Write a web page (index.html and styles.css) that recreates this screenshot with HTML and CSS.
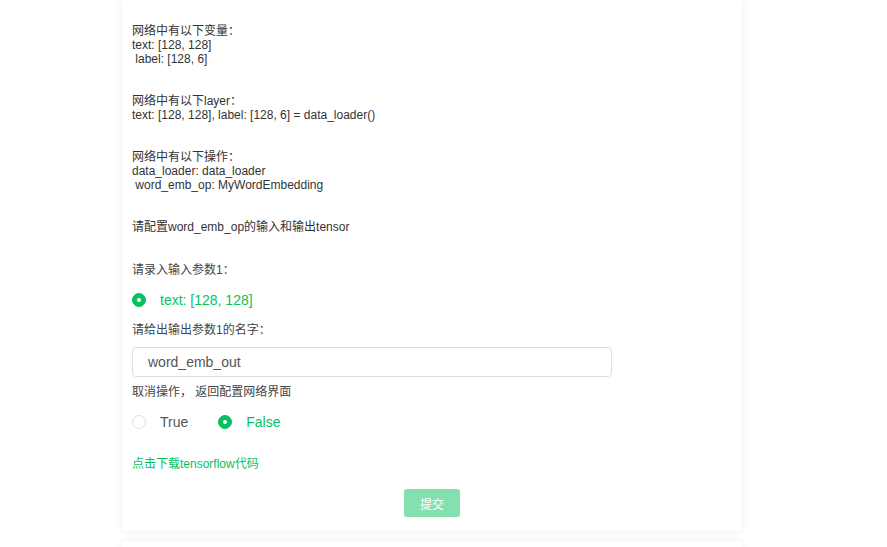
FILE: index.html
```html
<!DOCTYPE html>
<html lang="zh">
<head>
<meta charset="utf-8">
<link rel="stylesheet" href="styles.css">
</head>
<body>
<div class="page">
  <div class="card">
    <div class="block b1">网络中有以下变量：<br>text: [128, 128]<br>&nbsp;label: [128, 6]</div>
    <div class="block b2">网络中有以下layer：<br>text: [128, 128], label: [128, 6] = data_loader()</div>
    <div class="block b3">网络中有以下操作：<br>data_loader: data_loader<br>&nbsp;word_emb_op: MyWordEmbedding</div>
    <div class="block b4">请配置word_emb_op的输入和输出tensor</div>
    <div class="label l1">请录入输入参数1：</div>
    <div class="radio-row r1">
      <span class="radio checked"></span><span class="radio-text active">text: [128, 128]</span>
    </div>
    <div class="label l2">请给出输出参数1的名字：</div>
    <div class="input">word_emb_out</div>
    <div class="label l3">取消操作， 返回配置网络界面</div>
    <div class="radio-row r2">
      <span class="opt"><span class="radio"></span><span class="radio-text">True</span></span>
      <span class="opt"><span class="radio checked"></span><span class="radio-text active">False</span></span>
    </div>
    <div class="link">点击下载tensorflow代码</div>
    <div class="actions"><span class="btn">提交</span></div>
  </div>
  <div class="card next"></div>
</div>
</body>
</html>
```
FILE: styles.css
```css
html, body {
  margin: 0;
  padding: 0;
  background: #fff;
}
body {
  font-family: "Liberation Sans", "Noto Sans CJK SC", sans-serif;
  color: #333;
  font-size: 12px;
}
.page {
  padding-left: 122px;
  width: 620px;
}
.card {
  background: #fff;
  width: 620px;
  box-sizing: border-box;
  padding: 24px 10px 14px;
  box-shadow: 0 0 8px rgba(0, 0, 0, 0.07);
}
.card.next {
  margin-top: 10px;
  height: 60px;
}
.block {
  line-height: 14px;
  white-space: nowrap;
}
.b1, .b2, .b3 { margin-bottom: 28px; }
.label {
  line-height: 14px;
  color: #444;
}
.l1 { margin-top: 29px; }
.radio-row {
  display: flex;
  align-items: center;
  height: 20px;
}
.r1 { margin-top: 13px; }
.l2 { margin-top: 13px; }
.radio {
  width: 14px;
  height: 14px;
  box-sizing: border-box;
  border-radius: 50%;
  border: 1px solid #dcdfe6;
  background: #fff;
  display: inline-block;
  position: relative;
  flex: none;
}
.radio.checked {
  border-color: #07c160;
  background: #07c160;
}
.radio.checked::after {
  content: "";
  position: absolute;
  width: 4px;
  height: 4px;
  border-radius: 50%;
  background: #fff;
  left: 4px;
  top: 4px;
}
.radio-text {
  font-size: 14px;
  margin-left: 14px;
  color: #555;
}
.radio-text.active { color: #07c160; }
.opt {
  display: inline-flex;
  align-items: center;
  margin-right: 30px;
}
.input {
  margin-top: 10px;
  width: 480px;
  height: 30px;
  box-sizing: border-box;
  border: 1px solid #dcdfe6;
  border-radius: 4px;
  padding: 0 15px;
  line-height: 28px;
  font-size: 14px;
  color: #555;
}
.l3 { margin-top: 8px; }
.r2 { margin-top: 13px; }
.link {
  margin-top: 25px;
  line-height: 14px;
  color: #07c160;
}
.actions {
  margin-top: 18px;
  display: flex;
  justify-content: center;
}
.btn {
  display: inline-flex;
  align-items: center;
  justify-content: center;
  width: 56px;
  height: 28px;
  border-radius: 3px;
  background: #83e0af;
  color: #fff;
  font-size: 12px;
}
```
